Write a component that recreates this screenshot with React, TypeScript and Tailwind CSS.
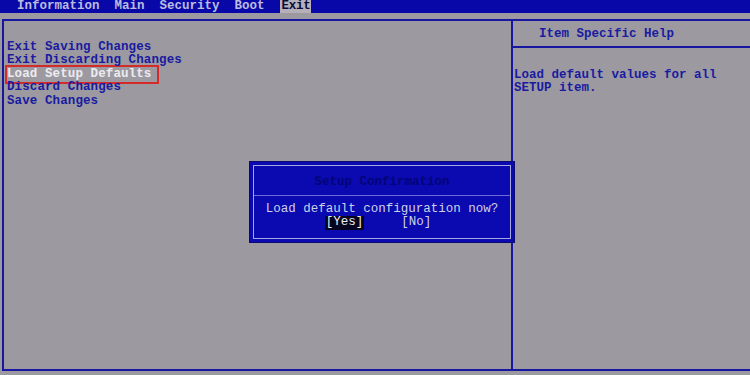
import React from "react";

const menu = [
  "Exit Saving Changes",
  "Exit Discarding Changes",
  "Load Setup Defaults",
  "Discard Changes",
  "Save Changes",
];

const tabs = ["Information", "Main", "Security", "Boot"];

export default function App() {
  return (
    <div
      className="relative w-[750px] h-[375px] overflow-hidden bg-[#9c9aa0] text-[12.5px] font-bold leading-[13.4px] text-[#1a1aa0]"
      style={{ fontFamily: '"Liberation Mono", "DejaVu Sans Mono", monospace' }}
    >
      {/* top tabs */}
      <div className="flex h-[13px] items-center bg-[#0808a8] pl-[17px] text-[#bcbce0]">
        {tabs.map((t) => (
          <span key={t} className="mr-[15px] whitespace-pre">
            {t}
          </span>
        ))}
        <span className="flex h-full w-[31px] items-center bg-[#b4b2b8] pl-[2px] tracking-[-0.3px] text-[#0a0a40]">
          Exit
        </span>
      </div>

      {/* main frame */}
      <div className="ml-[2px] mt-[6px] flex h-[352px] border-y-2 border-l-2 border-[#1616a0]">
        <div className="w-[507px] pt-[20px] pl-[3px] tracking-[0.1px]">
          {menu.map((m, i) =>
            i === 2 ? (
              <div
                key={m}
                className="-ml-[2px] -my-[3px] w-[154px] border-2 border-[#d42a2a] py-[1px] text-[#ecebf0]"
              >
                {m}
              </div>
            ) : (
              <div key={m}>{m}</div>
            )
          )}
        </div>
        <div className="flex flex-1 flex-col border-l-2 border-[#1616a0]">
          <div className="flex h-[27px] items-center border-b-2 border-[#1616a0] pl-[26px] pt-[2px]">
            Item Specific Help
          </div>
          <div className="pt-[21px] pl-[1px]">
            <div>Load default values for all</div>
            <div>SETUP item.</div>
          </div>
        </div>
      </div>

      {/* confirmation dialog */}
      <div className="absolute left-[249px] top-[161px] h-[82px] w-[266px] border border-[#0a0a70] bg-[#0a0ab0] p-[3px]">
        <div className="flex h-full flex-col border border-[#a8a8e0]">
          <div className="flex h-[30px] items-center justify-center border-b border-[#6a6ad8] pt-[5px] text-[#040478]">
            Setup Confirmation
          </div>
          <div className="pt-[7px] text-center font-normal text-[#d0d0e4]">
            Load default configuration now?
          </div>
          <div className="flex justify-center pr-[8px] font-normal text-[#d0d0e4]">
            <span className="bg-[#050520] px-[1px] text-[#f0f0f0]">[Yes]</span>
            <span className="ml-[37px]">[No]</span>
          </div>
        </div>
      </div>
    </div>
  );
}
